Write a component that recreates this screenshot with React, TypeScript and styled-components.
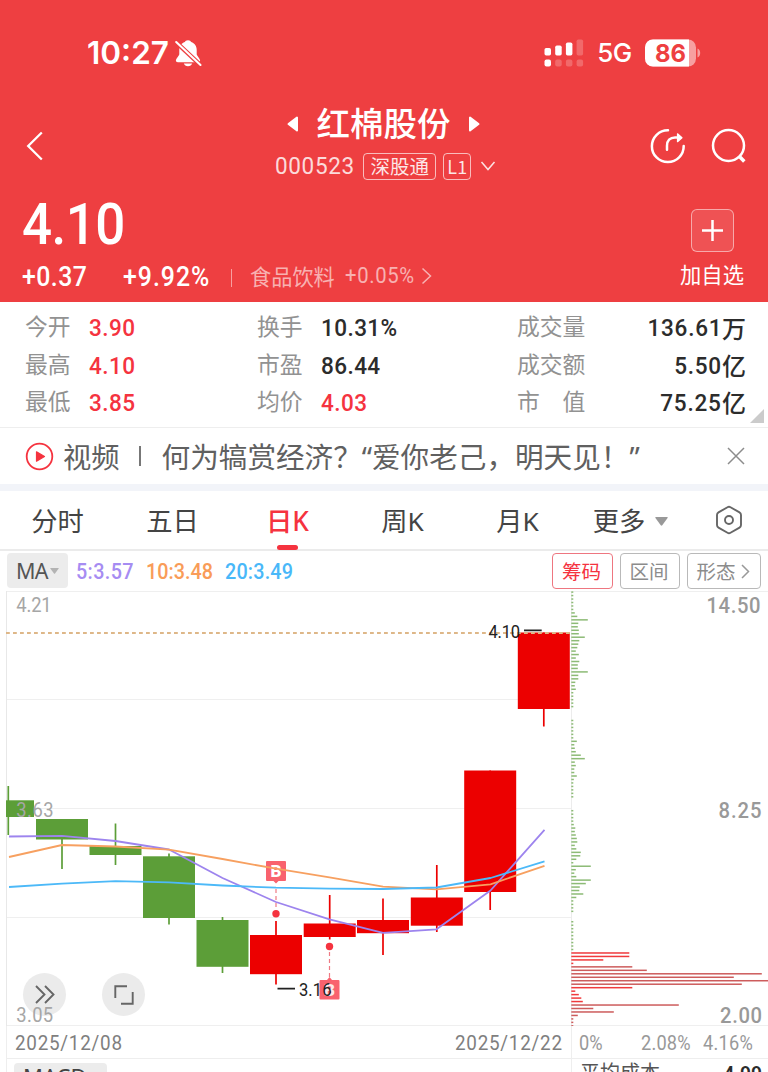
import React from "react";
import styled, { createGlobalStyle } from "styled-components";

const RED = "#ee3f41";
const ACCENT = "#f5333f";
const UP = "#ec0000";
const DOWN = "#5c9e38";
const LINE = "#eeeeee";
const NUM = `Roboto, "Noto Sans CJK SC", sans-serif`;
const CJK = `"Noto Sans", "Noto Sans CJK SC", sans-serif`;
/* figures are drawn slightly narrower than the font's own width */
const SQUEEZE = 0.92;

const GlobalStyle = createGlobalStyle`
  * { box-sizing: border-box; }
  body { margin: 0; background: #fff; font-family: "Noto Sans CJK SC", sans-serif; }
  svg { display: block; flex: none; }
`;

const Page = styled.main`
  width: 768px;
  height: 1072px;
  overflow: hidden;
  background: #fff;
  display: flex;
  flex-direction: column;
  white-space: nowrap;
`;

const Text = styled.span<{ $size: number; $color?: string; $weight?: number; $gap?: number }>`
  font-size: ${(p) => p.$size}px;
  font-weight: ${(p) => p.$weight ?? 400};
  letter-spacing: ${(p) => p.$gap ?? 0}px;
  color: ${(p) => p.$color ?? "inherit"};
  line-height: 1;
`;
const Num = styled(Text)<{ $w?: number; $end?: boolean }>`
  display: block;
  width: ${(p) => (p.$w ? `${p.$w}px` : "auto")};
  font-family: ${NUM};
  transform: scaleX(${SQUEEZE});
  transform-origin: ${(p) => (p.$end ? "right" : "left")} center;
`;
const Space = styled.i<{ $w: number }>`
  width: ${(p) => p.$w}px;
  flex: none;
`;

/* ---------- header ---------- */
const Header = styled.header`
  height: 302px;
  background: ${RED};
  color: #fff;
  flex: none;
`;
const StatusBar = styled.div`
  height: 104px;
  padding: 1px 67px 0 87px;
  display: flex;
  align-items: center;
  font-family: Inter, sans-serif;
`;
const StatusRight = styled.div`
  margin-left: auto;
  display: flex;
  align-items: center;
`;
const Nav = styled.div`
  height: 83px;
  padding: 0 21px 0 24px;
  display: grid;
  grid-template-columns: 124px 1fr 124px;
  align-items: center;
`;
const NavActions = styled.div`
  display: flex;
  justify-content: flex-end;
  gap: 25px;
`;
const TitleBlock = styled.div`
  display: flex;
  flex-direction: column;
  align-items: center;
  gap: 11px;
  margin-top: -4px;
`;
const TitleRow = styled.div`
  display: flex;
  align-items: center;
  gap: 17.5px;
  height: 34px;
  margin-right: 4px;
`;
const TitleText = styled(Text)`
  margin-top: -4px;
`;
const CodeRow = styled.div`
  display: flex;
  align-items: center;
  height: 28px;
`;
const Tag = styled.span<{ $w: number; $ml: number }>`
  width: ${(p) => p.$w}px;
  height: 27px;
  margin-left: ${(p) => p.$ml}px;
  border: 1px solid rgba(255, 255, 255, 0.65);
  border-radius: 4px;
  display: flex;
  align-items: center;
  justify-content: center;
  padding-bottom: 1px;
`;
const Quote = styled.div`
  height: 115px;
  padding: 0 23px 0 22px;
  display: flex;
  justify-content: space-between;
`;
const QuoteLeft = styled.div`
  padding-top: 9px;
`;
const ChangeRow = styled.div`
  display: flex;
  align-items: center;
  height: 28px;
  margin-top: 10px;
`;
const Sector = styled.div`
  display: flex;
  align-items: center;
  color: rgba(255, 255, 255, 0.6);
  margin-top: -3px;
`;
const Divider = styled.i<{ $h: number; $w: number; $color: string; $m: string }>`
  width: ${(p) => p.$w}px;
  height: ${(p) => p.$h}px;
  background: ${(p) => p.$color};
  margin: ${(p) => p.$m};
  flex: none;
`;
const AddStock = styled.div`
  width: 66px;
  padding-top: 22px;
  display: flex;
  flex-direction: column;
  align-items: center;
  gap: 11px;
`;
const AddButton = styled.div`
  width: 43px;
  height: 43px;
  border: 1px solid rgba(255, 255, 255, 0.5);
  border-radius: 6px;
  background: rgba(255, 255, 255, 0.1);
  display: grid;
  place-items: center;
`;

/* ---------- stats ---------- */
const Stats = styled.section`
  position: relative;
  height: 126px;
  padding: 7px 22px 0 25px;
  display: grid;
  grid-template-columns: 232px 260px 1fr;
  grid-auto-rows: 37.4px;
  border-bottom: 1px solid ${LINE};
  flex: none;
`;
const Stat = styled.div`
  display: flex;
  align-items: center;
`;
const StatLabel = styled(Text)`
  padding-bottom: 2px;
  margin-right: 18.5px;
`;
const Value = styled(Num)`
  padding-top: 2px;
  margin-left: ${(p) => (p.$end ? "auto" : "0")};
`;
const Corner = styled.i`
  position: absolute;
  right: 4px;
  bottom: 4px;
  border-left: 14px solid transparent;
  border-bottom: 14px solid #cbcbcb;
`;

/* ---------- news + tabs ---------- */
const News = styled.section`
  height: 56px;
  padding: 0 23px 0 25px;
  display: flex;
  align-items: center;
  font-family: ${CJK};
  flex: none;
`;
const Headline = styled(Text)`
  padding-top: 2px;
`;
const Band = styled.div`
  height: 7px;
  background: #f2f4f9;
  flex: none;
`;
const Tabs = styled.nav`
  height: 60px;
  display: grid;
  grid-template-columns: repeat(5, 115px) 111px 1fr;
  border-bottom: 2px solid #ebebeb;
  font-family: ${CJK};
  flex: none;
`;
const Tab = styled.div<{ $active?: boolean }>`
  position: relative;
  display: flex;
  align-items: center;
  justify-content: center;
  gap: 10px;
  padding-top: 3px;
  color: ${(p) => (p.$active ? ACCENT : "#444")};
  font-weight: ${(p) => (p.$active ? 500 : 400)};
  font-size: 26.3px;
  line-height: 1;
  &::after {
    content: "";
    display: ${(p) => (p.$active ? "block" : "none")};
    position: absolute;
    bottom: -1px;
    width: 21px;
    height: 5px;
    border-radius: 2.5px;
    background: ${ACCENT};
  }
`;
const SettingsTab = styled(Tab)`
  padding: 0 0 0 3px;
`;

const Toolbar = styled.div`
  height: 40px;
  padding: 2px 7px 0;
  display: flex;
  align-items: flex-start;
  flex: none;
`;
const Chip = styled.div<{ $w: number; $h?: number }>`
  width: ${(p) => p.$w}px;
  height: ${(p) => p.$h ?? 35}px;
  border-radius: 4px;
  background: #ececec;
  display: flex;
  align-items: center;
  padding-left: 9px;
  gap: 2px;
  font-family: ${CJK};
`;
const Averages = styled.div`
  height: 37px;
  margin-left: 8px;
  display: flex;
  align-items: center;
`;
const Modes = styled.div`
  margin-left: auto;
  display: flex;
  gap: 7px;
`;
const Mode = styled.div<{ $w: number; $active?: boolean }>`
  width: ${(p) => p.$w}px;
  height: 36px;
  border: 1px solid ${(p) => (p.$active ? "#ee7680" : "#b9b9b9")};
  border-radius: 4px;
  color: ${(p) => (p.$active ? ACCENT : "#8c8c8c")};
  font-size: 19.5px;
  line-height: 1;
  display: flex;
  align-items: center;
  justify-content: center;
  gap: 5px;
  padding-right: 2px;
`;

/* ---------- chart ---------- */
const Charts = styled.section`
  display: grid;
  grid-template-columns: 571px 197px;
  flex: 1;
`;
const Panel = styled.div`
  position: relative;
`;
const ChartLayer = styled.div`
  position: relative;
  z-index: 1;
`;
const Axis = styled.div<{ $pad: string; $inset?: number }>`
  height: 33px;
  margin-left: ${(p) => p.$inset ?? 0}px;
  padding: ${(p) => p.$pad};
  border: solid ${LINE};
  border-width: 0 0 1px 1px;
  display: flex;
  align-items: center;
  justify-content: space-between;
`;
const Foot = styled.div<{ $pad: string; $inset?: number }>`
  height: 40px;
  margin-left: ${(p) => p.$inset ?? 0}px;
  padding: ${(p) => p.$pad};
  border-left: 1px solid ${LINE};
  display: flex;
  align-items: flex-start;
  justify-content: space-between;
`;
const RoundButton = styled.div<{ $x: number }>`
  position: absolute;
  left: ${(p) => p.$x}px;
  top: 382px;
  width: 43px;
  height: 43px;
  border-radius: 50%;
  background: #ebebeb;
  display: grid;
  place-items: center;
`;

type Candle = { x: number; w: number; top: number; bottom: number; high: number; low: number; up?: boolean };
const candles: Candle[] = [
  { x: 6, w: 28, top: 800.3, bottom: 817, high: 786, low: 835 },
  { x: 36, w: 52, top: 819, bottom: 839.5, high: 819, low: 869 },
  { x: 89.5, w: 52, top: 846, bottom: 855, high: 823.5, low: 865 },
  { x: 143, w: 52, top: 856.3, bottom: 918, high: 853.5, low: 924.5 },
  { x: 196.5, w: 52, top: 920, bottom: 966.8, high: 917, low: 973 },
  { x: 250, w: 52, top: 935, bottom: 974.2, high: 921, low: 984.5, up: true },
  { x: 303.7, w: 52, top: 923.5, bottom: 937, high: 895, low: 939.5, up: true },
  { x: 357, w: 52, top: 920, bottom: 933.2, high: 898.5, low: 955, up: true },
  { x: 410.8, w: 52, top: 897.5, bottom: 925.7, high: 865, low: 932, up: true },
  { x: 464.2, w: 52, top: 770.5, bottom: 892, high: 770.5, low: 910, up: true },
  { x: 517.8, w: 52, top: 632.5, bottom: 709, high: 632.5, low: 726.5, up: true },
];
const xs = [9, 62, 115.5, 169, 222.5, 276, 329.5, 383, 436.5, 490.5, 544.5];
const averages: [string, number[]][] = [
  ["#9d84ee", [836.5, 835.8, 841, 849.5, 878, 902, 919.3, 932.8, 929.3, 890.5, 829.8]],
  ["#f7a060", [857, 845, 846.5, 849.7, 859, 868.7, 877.3, 886.7, 889.3, 884.3, 865.8]],
  ["#4cb9f8", [887, 883.7, 881.2, 882.3, 885.5, 887.7, 888.7, 889, 887.5, 878, 861.3]],
];

function Label(p: {
  x: number; y: number; size: number; width: number; fill: string; end?: boolean; weight?: number; children: string;
}) {
  return (
    <text
      transform={`translate(${p.x} ${p.y}) scale(${SQUEEZE} 1)`} fontSize={p.size} textLength={p.width / SQUEEZE}
      fill={p.fill} fontWeight={p.weight ?? 400} fontFamily={NUM} textAnchor={p.end ? "end" : "start"}
    >
      {p.children}
    </text>
  );
}

function KLine() {
  return (
    <svg width="571" height="435" viewBox="0 591 571 435">
      {[591.5, 699.5, 808.5, 917.5, 1025.5].map((y) => (
        <line key={y} x1="6" x2="571" y1={y} y2={y} stroke="#efefef" />
      ))}
      <line x1="6.5" x2="6.5" y1="591" y2="1026" stroke="#e8e8e8" />
      {candles.map((c, i) => {
        const mid = i === 0 ? 8.3 : c.x + c.w / 2;
        const fill = c.up ? UP : DOWN;
        return (
          <g key={c.x}>
            <line x1={mid} x2={mid} y1={c.high} y2={c.low} stroke={fill} strokeWidth="1.7" />
            <rect x={c.x} y={c.top} width={c.w} height={c.bottom - c.top} fill={fill} />
          </g>
        );
      })}
      <line x1="6" x2="571" y1="633" y2="633" stroke="#deb788" strokeWidth="1.9" strokeDasharray="3.8 3.2" />

      <g stroke="#ee7a84" strokeWidth="1.2" strokeDasharray="4 3">
        <line x1="276" x2="276" y1="889" y2="910" />
        <line x1="329.5" x2="329.5" y1="952" y2="978" />
      </g>
      <circle cx="276" cy="913.7" r="3.7" fill={ACCENT} />
      <circle cx="329.5" cy="946.5" r="3.7" fill={ACCENT} />
      <path d="M267 861h18a1 1 0 0 1 1 1v18a1 1 0 0 1-1 1h-6.5l-2.5 2.5-2.5-2.5H267a1 1 0 0 1-1-1v-18a1 1 0 0 1 1-1z" fill="#f9626e" />
      <path d="M320.5 980h6.5l2.5-3 2.5 3h6.5a1 1 0 0 1 1 1v17.5a1 1 0 0 1-1 1h-18a1 1 0 0 1-1-1v-17.5a1 1 0 0 1 1-1z" fill="#f9626e" />
      <g fill="#fff" fontFamily="Roboto, sans-serif" fontWeight="900" fontSize="17" textAnchor="middle">
        <text x="276" y="877">B</text>
        <text x="329.5" y="995.5" opacity="0.85">B</text>
      </g>

      {averages.map(([color, ys]) => (
        <polyline
          key={color} fill="none" stroke={color} strokeWidth="1.8" strokeLinejoin="round"
          points={ys.map((y, i) => `${xs[i]},${y}`).join(" ")}
        />
      ))}

      <path d="M277.5 988.7h17.5M524 630.3h17.7" stroke="#222" strokeWidth="1.8" />
      <Label x={299} y={996} size={18} width={32.5} fill="#222">3.16</Label>
      <Label x={488.5} y={637.5} size={18} width={31.5} fill="#222">4.10</Label>
      <Label x={16.2} y={612} size={20} width={35.5} fill="#a6a6a6">4.21</Label>
      <Label x={16.2} y={817} size={20} width={37.5} fill="#a6a6a6">3.63</Label>
      <Label x={16.2} y={1022} size={20} width={37} fill="#a6a6a6">3.05</Label>
    </svg>
  );
}

type Run = [start: number, lengths: number[]];
const greenRuns: Run[] = [
  [0, [2, 2, 2, 2, 2, 2, 3.5, 6, 16.5, 7, 6.5, 7.5, 7.5, 13.5, 8, 7, 6, 4.5, 7.5, 4.5, 8, 6.5, 6.5, 16.5, 7, 7, 4, 3.5, 4.5, 2, 2, 2, 2, 2]],
  [37, [2, 2, 2, 2, 2, 2, 5.5, 3, 3.5, 4.5, 9.5, 13.5, 3.5, 4.5, 3, 3, 5.5, 2.5, 2, 2, 2, 2, 2]],
  [63, [2, 2, 2, 2, 2.5, 4, 3.5, 4.5, 5.5, 6, 3.5, 5, 9.5, 9, 5, 2, 19.5, 4.5, 3, 5, 19.5, 14.5, 8.5, 8, 12, 5, 2, 2, 2, 2]],
  [95, [2, 2, 2, 2, 2, 2, 2, 2, 2]],
];
const redBars = [58, 58, 32, 2, 61, 75.5, 190.5, 162.5, 197, 170.5, 61, 4, 7.5, 10, 11.5, 107.5, 22, 42.5, 6.5, 2, 2, 2];
const brightReds = [0, 1, 2, 3, 10, 11, 12, 13, 14];
const barY = (i: number) => 592.1 + i * 3.47;

function ChipDistribution() {
  return (
    <svg width="197" height="435" viewBox="571 591 197 435">
      <path d="M571 591.5h197M571 1025.5h197" stroke="#efefef" />
      <path d="M571.5 591v435" stroke="#ececec" />
      {greenRuns.flatMap(([start, lengths]) =>
        lengths.map((w, i) => (
          <rect key={start + i} x="571.3" y={barY(start + i) - 0.75} width={w} height="1.5" fill="#8dbb76" />
        ))
      )}
      {redBars.map((w, i) => (
        <rect key={i} x="571.3" y={barY(104 + i) - 0.75} width={w} height="1.5" fill={brightReds.includes(i) ? "#f03a3c" : "#cd5c5c"} />
      ))}
      <Label x={760.5} y={612.7} size={22} width={54} fill="#999" weight={500} end>14.50</Label>
      <Label x={761.5} y={818} size={22} width={43} fill="#999" weight={500} end>8.25</Label>
      <Label x={762} y={1023} size={22} width={42} fill="#999" weight={500} end>2.00</Label>
    </svg>
  );
}

/* ---------- icons ---------- */
const Caret = ({ w, h, color }: { w: number; h: number; color: string }) => (
  <svg width={w} height={h} viewBox="0 0 12 8" preserveAspectRatio="none">
    <path d="M.8 0h10.4q.9 0 .4.8L6.7 7.4q-.7.7-1.4 0L.4.8Q-.1 0 .8 0z" fill={color} />
  </svg>
);
const TitleArrow = ({ flip }: { flip?: boolean }) => (
  <svg width="12" height="16" viewBox="0 0 12 16">
    <path
      d={flip ? "M2 1.5v13L10.5 8z" : "M10 1.5v13L1.5 8z"}
      fill="#fff" stroke="#fff" strokeWidth="2" strokeLinejoin="round"
    />
  </svg>
);
const Bell = () => (
  <svg width="28" height="28" viewBox="0 0 28 28">
    <path
      d="M14 1.200c-1.800 0-2.800.9-3.200 1.900C7.400 4.200 5.300 7.200 5.300 11v4.300c0 1.500-3.400 4.300-3.400 6.200 0 1.100.8 1.700 1.900 1.700h20.400c1.100 0 1.900-.6 1.900-1.700 0-1.900-3.400-4.700-3.400-6.200V11c0-3.800-2.100-6.800-5.500-7.900-.4-1-1.400-1.900-3.200-1.900zM9.800 24.600h8.400c-.5 1.600-2.200 2.700-4.200 2.700s-3.700-1.100-4.200-2.700z"
      fill="#fff"
    />
    <path d="M2 3.200l24.500 23" stroke={RED} strokeWidth="4.4" />
    <path d="M2.200 3l24.300 23" stroke="#fff" strokeWidth="2.1" strokeLinecap="round" />
  </svg>
);
const Signal = () => (
  <svg width="40" height="28" viewBox="0 0 40 28" fill="#fff">
    <rect x="0.5" y="9" width="6.5" height="7.5" rx="1.7" />
    <rect x="11.2" y="6.5" width="6.5" height="10" rx="1.7" />
    <rect x="21.9" y="3.5" width="6.5" height="13" rx="1.7" />
    <rect x="32.6" y="0.5" width="6.5" height="16" rx="1.7" opacity=".22" />
    <rect x="0.5" y="20.5" width="6.5" height="7" rx="2" />
    <rect x="11.2" y="20.5" width="6.5" height="7" rx="2" opacity=".22" />
    <rect x="21.9" y="20.5" width="6.5" height="7" rx="2" opacity=".22" />
    <rect x="32.6" y="20.5" width="6.5" height="7" rx="2" opacity=".22" />
  </svg>
);
const Battery = () => (
  <svg width="56" height="28" viewBox="0 0 56 28">
    <rect x="0" y="0.5" width="51" height="27" rx="8" fill="#fff" opacity=".5" />
    <path d="M8 .5h36v27H8a8 8 0 0 1-8-8v-11a8 8 0 0 1 8-8z" fill="#fff" />
    <path d="M52.5 9.500c3.600 1 3.600 8 0 9z" fill="#fff" opacity=".5" />
    <text x="25.5" y="22.5" textAnchor="middle" fontFamily="Inter, sans-serif" fontWeight="700" fontSize="24.5" fill={RED} textLength="31" lengthAdjust="spacingAndGlyphs">86</text>
  </svg>
);
const Back = () => (
  <svg width="22" height="32" viewBox="0 0 22 32" fill="none" stroke="#fff" strokeWidth="2.3">
    <path d="M17.8 2.500L4.200 16 17.800 29.500" />
  </svg>
);
const Share = () => (
  <svg width="36" height="36" viewBox="0 0 36 36" fill="none" stroke="#fff" strokeWidth="2.5" strokeLinecap="round" strokeLinejoin="round">
    <path d="M18 2.300A15.900 15.900 0 1 0 33.700 18" />
    <path d="M17 21.700v-4c0-5 3-8.200 8-8.200h5" />
    <path d="M27.5 5.800L32 9.700l-4.500 4z" fill="#fff" strokeWidth="1.2" />
  </svg>
);
const Search = () => (
  <svg width="36" height="36" viewBox="0 0 36 36" fill="none" stroke="#fff" strokeWidth="2.5">
    <circle cx="17.5" cy="17.5" r="15.5" />
    <path d="M28 28l5.300 5.500" strokeWidth="3.5" />
  </svg>
);
const Angle = ({ w, h, d, color, sw = 1.5 }: { w: number; h: number; d: string; color: string; sw?: number }) => (
  <svg width={w} height={h} viewBox={`0 0 ${w} ${h}`} fill="none" stroke={color} strokeWidth={sw}>
    <path d={d} />
  </svg>
);

const INK = "#2c2c2c";
type StatItem = { label: string; value: string; color: string; unit?: string };
const stats: StatItem[] = [
  { label: "今开", value: "3.90", color: ACCENT },
  { label: "换手", value: "10.31%", color: INK },
  { label: "成交量", value: "136.61", color: INK, unit: "万" },
  { label: "最高", value: "4.10", color: ACCENT },
  { label: "市盈", value: "86.44", color: INK },
  { label: "成交额", value: "5.50", color: INK, unit: "亿" },
  { label: "最低", value: "3.85", color: ACCENT },
  { label: "均价", value: "4.03", color: ACCENT },
  { label: "市　值", value: "75.25", color: INK, unit: "亿" },
];

export default function App() {
  return (
    <Page>
      <GlobalStyle />
      <Header>
        <StatusBar>
          <Text $size={31.5} $weight={600}>10:27</Text>
          <Space $w={5} />
          <Bell />
          <StatusRight>
            <Signal />
            <Space $w={13} />
            <Text $size={26} $weight={500} $gap={-0.6}>5G</Text>
            <Space $w={13.5} />
            <Battery />
          </StatusRight>
        </StatusBar>
        <Nav>
          <Back />
          <TitleBlock>
            <TitleRow>
              <TitleArrow />
              <TitleText $size={33.5} $weight={500}>红棉股份</TitleText>
              <TitleArrow flip />
            </TitleRow>
            <CodeRow>
              <Num $size={24.5} $w={79.5} $gap={0.7} $color="rgba(255,255,255,.82)">000523</Num>
              <Tag $w={73} $ml={9}><Text $size={19.5} $color="rgba(255,255,255,.88)">深股通</Text></Tag>
              <Tag $w={28} $ml={7}><Text $size={18} $color="rgba(255,255,255,.88)">L1</Text></Tag>
              <Space $w={9} />
              <Angle w={16} h={12} d="M1.5 2L8 9.500 14.500 2" color="rgba(255,255,255,.85)" />
            </CodeRow>
          </TitleBlock>
          <NavActions><Share /><Search /></NavActions>
        </Nav>
        <Quote>
          <QuoteLeft>
            <Num $size={57.5} $w={104} $weight={500} $gap={-0.6}>4.10</Num>
            <ChangeRow>
              <Num $size={27} $w={66} $weight={500} $gap={0.5}>+0.37</Num>
              <Space $w={35} />
              <Num $size={27} $w={87} $weight={500} $gap={1.1}>+9.92%</Num>
              <Divider $w={1} $h={18} $color="rgba(255,255,255,.5)" $m="0 18px 0 21px" />
              <Sector>
                <Text $size={21.2}>食品饮料</Text>
                <Space $w={10.5} />
                <Num $size={22} $w={70} $gap={0.7}>+0.05%</Num>
                <Space $w={6} />
                <Angle w={11} h={18} d="M1.5 1.5L9.5 9 1.5 16.5" color="rgba(255,255,255,.6)" />
              </Sector>
            </ChangeRow>
          </QuoteLeft>
          <AddStock>
            <AddButton>
              <Angle w={23} h={23} d="M11.5 1v21M1 11.5h21" color="#fff" sw={2.5} />
            </AddButton>
            <Text $size={21.3}>加自选</Text>
          </AddStock>
        </Quote>
      </Header>

      <Stats>
        {stats.map(({ label, value, color, unit }) => (
          <Stat key={label}>
            <StatLabel $size={22.8} $color="#929292">{label}</StatLabel>
            <Value $size={24.5} $weight={500} $gap={unit ? 0.8 : 0.45} $color={color} $end={!!unit}>{value}</Value>
            {unit && <Text $size={24} $weight={500} $color={INK}>{unit}</Text>}
          </Stat>
        ))}
        <Corner />
      </Stats>

      <News>
        <svg width="29" height="29" viewBox="0 0 29 29">
          <circle cx="14.5" cy="14.5" r="12.8" fill="none" stroke={ACCENT} strokeWidth="1.8" />
          <path d="M11.5 9.800l8 4.700-8 4.700z" fill={ACCENT} stroke={ACCENT} strokeWidth="1.2" strokeLinejoin="round" />
        </svg>
        <Space $w={9} />
        <Headline $size={28.3} $color="#606060">视频</Headline>
        <Divider $w={2} $h={20} $color="#777" $m="0 21px 0 19px" />
        <Headline $size={28.6} $color="#606060">何为犒赏经济？“爱你老己，明天见！”</Headline>
        <Divider $w={1} $h={1} $color="transparent" $m="0 auto" />
        <Angle w={18} h={18} d="M1 1l16 16M17 1L1 17" color="#8c8c8c" />
      </News>
      <Band />
      <Tabs>
        <Tab>分时</Tab>
        <Tab>五日</Tab>
        <Tab $active>日K</Tab>
        <Tab>周K</Tab>
        <Tab>月K</Tab>
        <Tab>更多<Caret w={13} h={9} color="#999" /></Tab>
        <SettingsTab>
          <svg width="28" height="30" viewBox="0 0 28 30" fill="none" stroke="#666" strokeWidth="1.9" strokeLinejoin="round">
            <path d="M12.5 2.200q1.500-.9 3 0l9 5.200q1.500.9 1.500 2.600v10q0 1.700-1.500 2.600l-9 5.200q-1.500.9-3 0l-9-5.200Q2 21.700 2 20V10q0-1.700 1.500-2.600z" />
            <circle cx="14" cy="15" r="4" />
          </svg>
        </SettingsTab>
      </Tabs>

      <Toolbar>
        <Chip $w={61}>
          <Text $size={21.5} $color="#555" $gap={-0.8}>MA</Text>
          <Caret w={9} h={6} color="#b3b3b3" />
        </Chip>
        <Averages>
          <Num $w={70} $size={21.5} $weight={500} $gap={0.4} $color="#a68cf2">5:3.57</Num>
          <Num $w={78.5} $size={21.5} $weight={500} $gap={0} $color="#f99c58">10:3.48</Num>
          <Num $w={70} $size={21.5} $weight={500} $gap={0.2} $color="#49b8f9">20:3.49</Num>
        </Averages>
        <Modes>
          <Mode $w={61} $active>筹码</Mode>
          <Mode $w={60}>区间</Mode>
          <Mode $w={74}>形态<Angle w={9} h={15} d="M1 1l6.5 6.5L1 14" color="#999" /></Mode>
        </Modes>
      </Toolbar>

      <Charts>
        <Panel>
          <RoundButton $x={23}>
            <Angle w={20} h={19} d="M1 1l8.5 8.5L1 18M10 1l8.5 8.5L10 18" color="#666" sw={1.9} />
          </RoundButton>
          <RoundButton $x={102}>
            <Angle w={20} h={20} d="M13 1.300H1.300V13M7 18.700h11.700V7" color="#666" sw={1.9} />
          </RoundButton>
          <ChartLayer>
            <KLine />
          </ChartLayer>
          <Axis $inset={6} $pad="3px 8px 0 8px">
            <Num $size={20.5} $w={108} $color="#7f7f7f" $gap={0.8}>2025/12/08</Num>
            <Num $size={20.5} $w={108.5} $color="#7f7f7f" $gap={0.8}>2025/12/22</Num>
          </Axis>
          <Foot $inset={6} $pad="4px 0 0 7px">
            <Chip $w={93} $h={26}>
              <Text $size={22} $color="#444">MACD</Text>
            </Chip>
          </Foot>
        </Panel>
        <Panel>
          <ChipDistribution />
          <Axis $pad="4px 14px 0 7px">
            <Num $size={19.8} $w={25} $color="#999">0%</Num>
            <Divider $w={1} $h={1} $color="transparent" $m="0 auto" />
            <Num $size={19.8} $w={50} $color="#999" $gap={0.2}>2.08%</Num>
            <Space $w={12} />
            <Num $size={19.8} $w={51} $color="#999" $gap={0.3}>4.16%</Num>
          </Axis>
          <Foot $pad="3px 6px 0 8px">
            <Text $size={20} $color="#555">平均成本</Text>
            <Value $size={21} $weight={600} $color={INK} $end>4.99</Value>
          </Foot>
        </Panel>
      </Charts>
    </Page>
  );
}
